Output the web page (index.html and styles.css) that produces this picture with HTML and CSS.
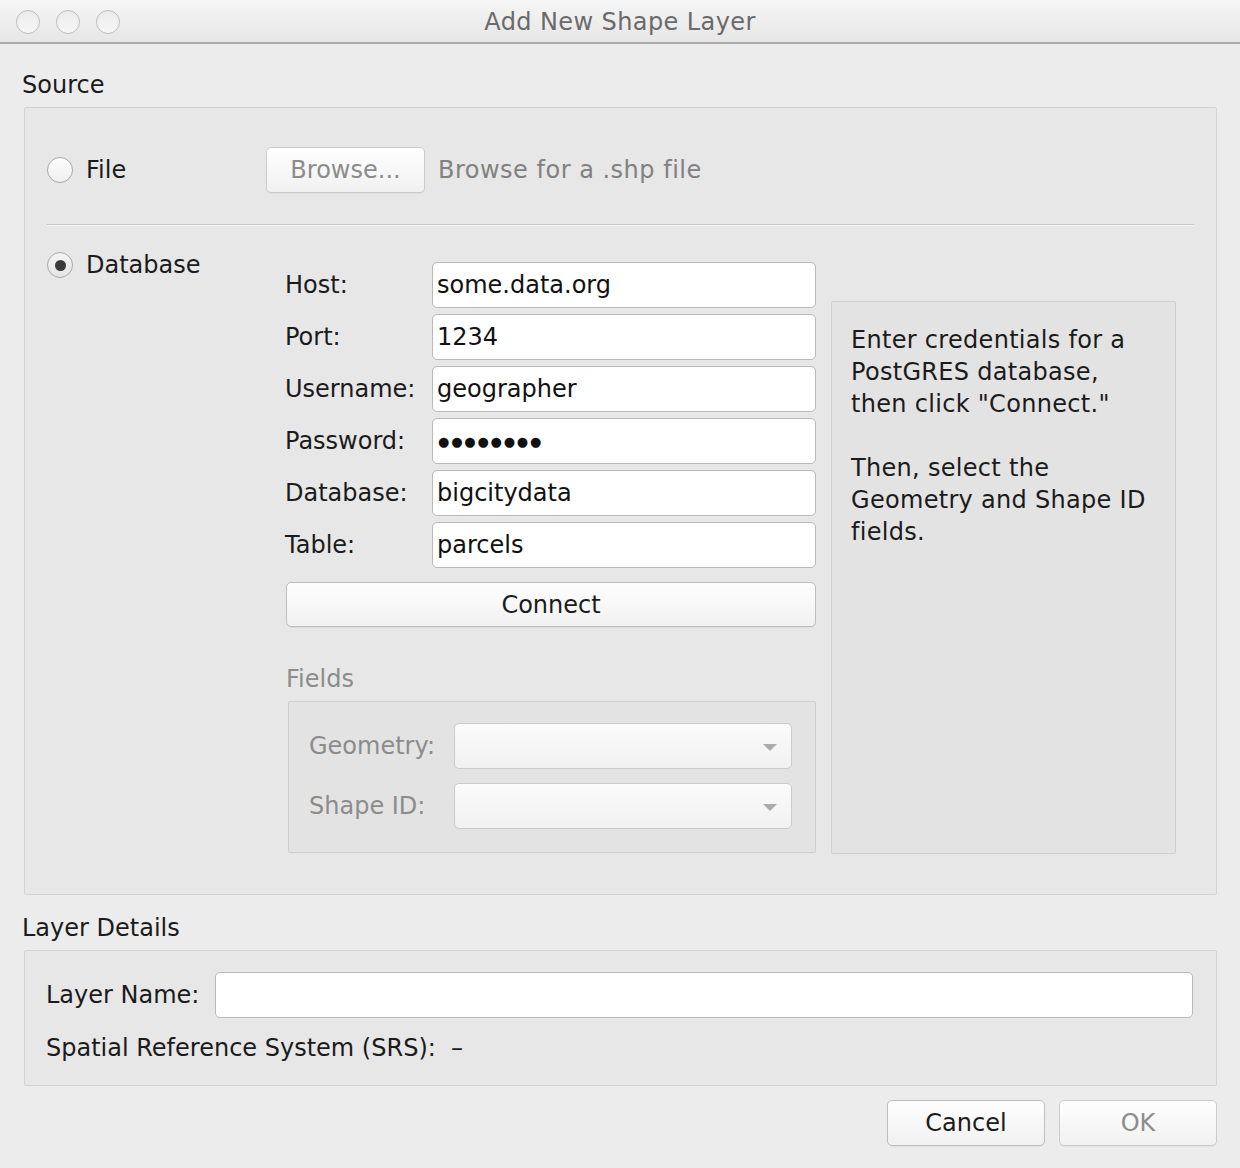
FILE: index.html
```html
<!DOCTYPE html>
<html>
<head>
<meta charset="utf-8">
<link rel="stylesheet" href="styles.css">
</head>
<body>
<div class="window">
  <div class="titlebar">
    <div class="lights">
      <span class="light"></span><span class="light"></span><span class="light"></span>
    </div>
    <div class="title">Add New Shape Layer</div>
  </div>
  <div class="content">
    <div class="section-label">Source</div>
    <div class="group source">
      <div class="file-row">
        <div class="radio-opt"><span class="radio"></span><span class="opt-label">File</span></div>
        <div class="btn disabled browse">Browse...</div>
        <div class="hint">Browse for a .shp file</div>
      </div>
      <div class="separator"></div>
      <div class="db-row">
        <div class="radio-opt db-opt"><span class="radio checked"></span><span class="opt-label">Database</span></div>
        <div class="db-form">
          <div class="form-grid">
            <div class="flabel">Host:</div><div class="field">some.data.org</div>
            <div class="flabel">Port:</div><div class="field">1234</div>
            <div class="flabel">Username:</div><div class="field">geographer</div>
            <div class="flabel">Password:</div><div class="field"><span class="dots">●●●●●●●●</span></div>
            <div class="flabel">Database:</div><div class="field">bigcitydata</div>
            <div class="flabel">Table:</div><div class="field">parcels</div>
          </div>
          <div class="btn connect">Connect</div>
          <div class="fields-label">Fields</div>
          <div class="group inner fields-box">
            <div class="combo-row"><div class="clabel">Geometry:</div><div class="combo"><span class="arrow"></span></div></div>
            <div class="combo-row"><div class="clabel">Shape ID:</div><div class="combo"><span class="arrow"></span></div></div>
          </div>
        </div>
        <div class="group inner info">
          <p>Enter credentials for a PostGRES database, then click "Connect."</p>
          <p>Then, select the Geometry and Shape ID fields.</p>
        </div>
      </div>
    </div>
    <div class="section-label details-label">Layer Details</div>
    <div class="group details">
      <div class="name-row"><div class="nlabel">Layer Name:</div><div class="field name-field"></div></div>
      <div class="srs">Spatial Reference System (SRS):&nbsp; –</div>
    </div>
    <div class="actions">
      <div class="btn action">Cancel</div>
      <div class="btn action disabled">OK</div>
    </div>
  </div>
</div>
</body>
</html>
```
FILE: styles.css
```css
html, body {
  margin: 0;
  padding: 0;
}
body {
  width: 1240px;
  height: 1168px;
  background: #ececec;
  font-family: "DejaVu Sans", "Liberation Sans", sans-serif;
  font-size: 24px;
  color: #1b1b1b;
  overflow: hidden;
}
.window {
  width: 1240px;
  height: 1168px;
  background: #ececec;
}
.titlebar {
  height: 42px;
  border-bottom: 2px solid #a9a9a9;
  background: linear-gradient(#f6f6f6, #e6e6e6);
  display: flex;
  align-items: center;
  position: relative;
}
.lights {
  display: flex;
  gap: 16px;
  padding-left: 16px;
  padding-top: 2px;
}
.light {
  width: 24px;
  height: 24px;
  border-radius: 50%;
  border: 1.5px solid #bdbdbd;
  background: linear-gradient(#ebebeb, #f7f7f7);
  box-sizing: border-box;
}
.title {
  position: absolute;
  left: 0;
  right: 0;
  top: 0;
  line-height: 44px;
  text-align: center;
  color: #6a6a6a;
  letter-spacing: 0.4px;
}
.content {
  padding: 0 23px 0 24px;
}
.section-label {
  margin-left: -2px;
  height: 63px;
  display: flex;
  align-items: flex-end;
  line-height: 28px;
  padding-bottom: 8px;
  box-sizing: border-box;
  margin-top: 0;
}
.group {
  border: 1px solid #d3d3d3;
  border-radius: 2px;
  background: #e7e7e7;
  box-sizing: border-box;
}
.group.inner {
  background: #e3e3e3;
  border-color: #cfcfcf;
}
.source {
  height: 788px;
  padding: 39px 22px 0 22px;
}
.file-row {
  display: flex;
  align-items: center;
  height: 46px;
}
.radio-opt {
  display: flex;
  align-items: center;
  width: 219px;
}
.radio {
  width: 26px;
  height: 26px;
  border-radius: 50%;
  border: 1px solid #a9a9a9;
  background: linear-gradient(#fdfdfd, #f1f1f1);
  box-sizing: border-box;
  display: flex;
  align-items: center;
  justify-content: center;
  margin-right: 13px;
  flex: none;
}
.radio.checked {
  background: linear-gradient(#f4f4f4, #e4e4e4);
}
.radio.checked::after {
  content: "";
  width: 11px;
  height: 11px;
  border-radius: 50%;
  background: #3a3a3a;
}
.btn {
  height: 46px;
  border: 1px solid #bdbdbd;
  border-radius: 5px;
  background: linear-gradient(#fefefe, #f1f1f1);
  box-sizing: border-box;
  display: flex;
  align-items: center;
  justify-content: center;
  color: #1b1b1b;
  box-shadow: 0 1px 0 rgba(0,0,0,0.04);
}
.btn.disabled {
  color: #8c8c8c;
  border-color: #cbcbcb;
}
.browse {
  width: 159px;
}
.hint {
  margin-left: 13px;
  color: #818181;
  letter-spacing: 0.5px;
}
.separator {
  margin-top: 31px;
  height: 1px;
  background: #c8c8c8;
  border-bottom: 1px solid #f6f6f6;
}
.db-row {
  display: flex;
  align-items: flex-start;
}
.db-opt {
  margin-top: 25px;
  width: 239px;
}
.db-form {
  margin-top: 36px;
  width: 530px;
}
.form-grid {
  display: grid;
  grid-template-columns: 146px 384px;
  row-gap: 6px;
  align-items: center;
}
.flabel {
  margin-left: -1px;
}
.field {
  height: 46px;
  border: 1px solid #b9b9b9;
  border-radius: 5px;
  background: #fff;
  box-sizing: border-box;
  padding-left: 4px;
  display: flex;
  align-items: center;
  color: #111;
}
.dots {
  font-size: 13px;
  letter-spacing: 1.8px;
  padding-left: 1px;
}
.connect {
  margin-top: 14px;
  height: 45px;
}
.fields-label {
  color: #8c8c8c;
  margin-top: 38px;
  line-height: 28px;
}
.fields-box {
  margin-top: 8px;
  margin-left: 2px;
  padding: 21px 23px 23px 20px;
  display: flex;
  flex-direction: column;
  gap: 14px;
}
.combo-row {
  display: flex;
  align-items: center;
}
.clabel {
  width: 145px;
  color: #8c8c8c;
}
.combo {
  flex: 1;
  height: 46px;
  border: 1px solid #cbcbcb;
  border-radius: 5px;
  background: linear-gradient(#fbfbfb, #f1f1f1);
  box-sizing: border-box;
  position: relative;
}
.arrow {
  position: absolute;
  right: 14px;
  top: 20px;
  width: 0;
  height: 0;
  border-left: 7px solid transparent;
  border-right: 7px solid transparent;
  border-top: 7px solid #ababab;
}
.info {
  margin-top: 75px;
  margin-left: 15px;
  width: 345px;
  height: 553px;
  padding: 22px 16px 0 19px;
  line-height: 32px;
  letter-spacing: 0.3px;
}
.info p {
  margin: 0 0 32px 0;
}
.details-label {
  height: 55px;
  padding-bottom: 8px;
}
.details {
  height: 136px;
  padding: 21px 23px 0 21px;
}
.name-row {
  display: flex;
  align-items: center;
}
.nlabel {
  width: 169px;
}
.name-field {
  flex: 1;
}
.srs {
  margin-top: 14px;
  line-height: 32px;
}
.actions {
  display: flex;
  justify-content: flex-end;
  gap: 14px;
  margin-top: 14px;
}
.action {
  width: 158px;
  height: 46px;
}
```
